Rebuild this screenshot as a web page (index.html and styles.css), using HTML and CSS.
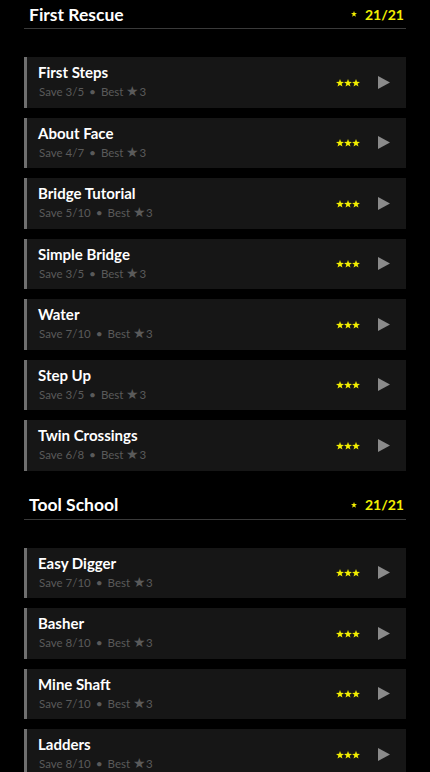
FILE: index.html
```html
<!DOCTYPE html>
<html lang="en">
<head>
  <meta charset="UTF-8">
  <meta name="viewport" content="width=device-width, initial-scale=1.0">
  <title>Levels</title>
  <link rel="stylesheet" href="styles.css">
</head>
<body>
  <div class="container" id="sections">
    <!-- Sections are rendered from levelData below -->
  </div>
  <script>
    // Level packs and their levels
    const levelData = [
      {
        title: "First Rescue",
        score: "21/21",
        levels: [
          { name: "First Steps", save: "3/5" },
          { name: "About Face", save: "4/7" },
          { name: "Bridge Tutorial", save: "5/10" },
          { name: "Simple Bridge", save: "3/5" },
          { name: "Water", save: "7/10" },
          { name: "Step Up", save: "3/5" },
          { name: "Twin Crossings", save: "6/8" }
        ]
      },
      {
        title: "Tool School",
        score: "21/21",
        levels: [
          { name: "Easy Digger", save: "7/10" },
          { name: "Basher", save: "8/10" },
          { name: "Mine Shaft", save: "7/10" },
          { name: "Ladders", save: "8/10" }
        ]
      }
    ];

    const starPath = "M4 0 L5 2.8 L8 2.9 L5.6 4.7 L6.5 7.6 L4 5.9 L1.5 7.6 L2.4 4.7 L0 2.9 L3 2.8 Z";

    function renderSections() {
      const container = document.getElementById("sections");
      levelData.forEach(pack => {
        const section = document.createElement("section");
        section.className = "pack";
        let html = `
          <div class="pack-header">
            <h2>${pack.title}</h2>
            <span class="pack-score">
              <svg class="score-star" viewBox="0 0 8 8" width="6" height="6"><path d="${starPath}"/></svg>
              ${pack.score}
            </span>
          </div>
          <ul class="level-list">`;
        pack.levels.forEach(level => {
          html += `
            <li class="level">
              <div class="level-info">
                <h3>${level.name}</h3>
                <p>Save ${level.save} <span class="dot">&bull;</span> Best <span class="best-star">&#9733;</span>3</p>
              </div>
              <svg class="level-stars" viewBox="0 0 24 8" width="24" height="8">
                <path d="${starPath}"/>
                <path d="${starPath}" transform="translate(8 0)"/>
                <path d="${starPath}" transform="translate(16 0)"/>
              </svg>
              <svg class="play" viewBox="0 0 12 13" width="12" height="13"><path d="M0 0 L12 6.5 L0 13 Z"/></svg>
            </li>`;
        });
        html += `</ul>`;
        section.innerHTML = html;
        container.appendChild(section);
      });
    }

    renderSections();
  </script>
</body>
</html>
```

FILE: styles.css
```css
body {
  margin: 0;
  padding: 0;
  background-color: #000;
  font-family: Lato, "Open Sans", sans-serif;
  color: #fff;
}
.container {
  padding: 0 24px;
}
.pack {
  margin-bottom: 20px;
}
.pack-header {
  display: flex;
  align-items: center;
  justify-content: space-between;
  height: 28px;
  padding: 0 2px 0 5px;
  border-bottom: 1px solid #3a3a3a;
}
.pack-header h2 {
  margin: 0;
  font-size: 17.5px;
  font-weight: 700;
}
.pack-score {
  display: flex;
  align-items: center;
  gap: 8px;
  color: #f2ee00;
  font-size: 14px;
  font-weight: 700;
}
.score-star {
  fill: #f2ee00;
}
.level-list {
  list-style: none;
  margin: 28px 0 0;
  padding: 0;
  display: flex;
  flex-direction: column;
  gap: 10px;
}
.level {
  display: flex;
  align-items: center;
  height: 50.5px;
  box-sizing: border-box;
  background-color: #161616;
  border-left: 3px solid #6f6f6f;
  padding: 0 16px 0 11px;
}
.level-info {
  flex: 1;
  padding-bottom: 2px;
}
.level-info h3 {
  margin: 0;
  font-size: 15px;
  font-weight: 700;
  line-height: 19px;
}
.level-info p {
  margin: 3px 0 0 1px;
  font-size: 11.5px;
  line-height: 14px;
  color: #5a5a5a;
}
.dot {
  margin: 0 2px;
  font-size: 12px;
}
.best-star {
  font-size: 14px;
  line-height: 10px;
}
.level-stars {
  fill: #f2ee00;
  margin-top: 1px;
}
.play {
  fill: #8a8a8a;
  margin-left: 18px;
}
```
